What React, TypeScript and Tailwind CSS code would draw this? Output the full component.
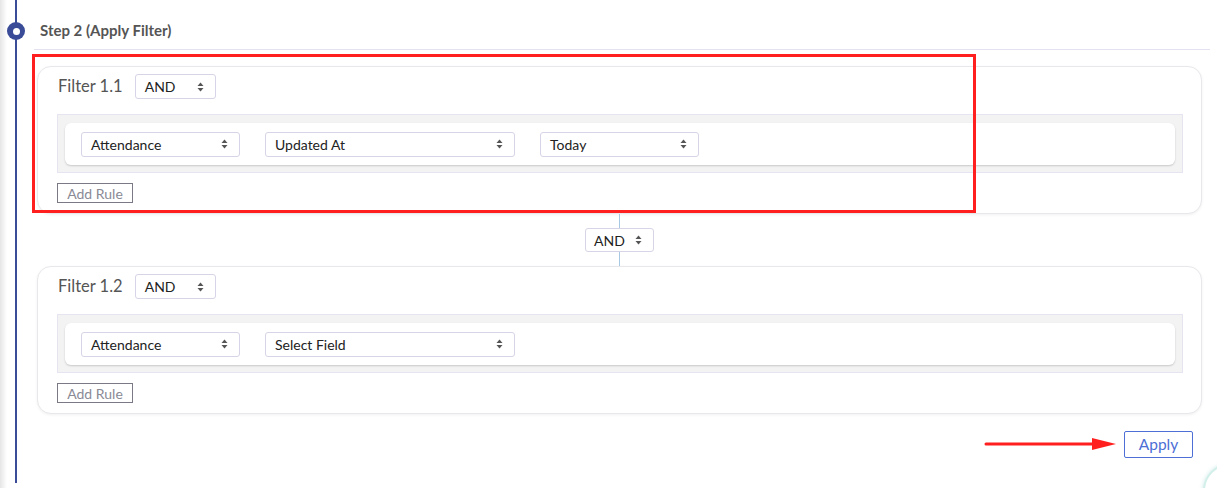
import React from "react";

const font = { fontFamily: "Lato, 'Open Sans', sans-serif" };

function Arrows() {
  return (
    <svg width="7" height="10" viewBox="0 0 7 10" className="shrink-0">
      <path d="M3.5 0.5 L6.5 4 L0.5 4 Z" fill="#555" />
      <path d="M3.5 9.5 L6.5 6 L0.5 6 Z" fill="#555" />
    </svg>
  );
}

function Select({ label, w }: { label: string; w: string }) {
  return (
    <div
      className={`${w} flex h-[25px] items-center justify-between rounded-[3px] border border-[#d6d4e6] bg-white pl-[9px] pr-[11px] text-[14px] text-[#222]`}
    >
      <span>{label}</span>
      <Arrows />
    </div>
  );
}

function FilterCard({ name, rules }: { name: string; rules: { label: string; w: string }[] }) {
  return (
    <div className="h-[148px] rounded-[14px] border border-[#e8e8ec] bg-white pl-[19px] pr-[18px] pt-[7px] shadow-[0_1px_3px_rgba(0,0,0,0.06)]">
      <div className="ml-px flex items-center gap-[12px]">
        <span className="text-[16.5px] text-[#555]">{name}</span>
        <Select label="AND" w="w-[81px]" />
      </div>
      <div className="mt-[15px] h-[59px] border border-[#e6e4f0] bg-[#f3f3f3] px-[7px] pt-[8px]">
        <div className="flex h-[42px] items-center gap-[25px] rounded-[6px] bg-white pl-[16px] shadow-[0_1px_2px_rgba(0,0,0,0.18)]">
          {rules.map((r, i) => (
            <Select key={i} label={r.label} w={r.w} />
          ))}
        </div>
      </div>
      <button
        type="button"
        className="mt-[10px] flex h-[20px] w-[76px] items-center justify-center border border-[#7a7a86] text-[14px] text-[#8a8a96]"
      >
        Add Rule
      </button>
    </div>
  );
}

export default function App() {
  return (
    <div className="relative flex h-[488px] w-[1217px] overflow-hidden bg-white" style={font}>
      {/* left edge shade */}
      <div className="w-[7px] shrink-0 bg-gradient-to-r from-[#e6e6e6] to-white" />

      {/* timeline */}
      <div className="relative w-[27px] shrink-0">
        <div className="absolute left-[8px] top-0 h-[483px] w-[2px] bg-[#3a4c98]" />
        <div className="absolute left-0 top-[22px] flex h-[18px] w-[18px] items-center justify-center rounded-full bg-[#3a4c98]">
          <div className="h-[7px] w-[7px] rounded-full bg-white" />
        </div>
      </div>

      {/* main */}
      <div className="w-[1176px] shrink-0">
        <div className="flex h-[50px] items-end border-b border-[#e4e2f0] pb-[8px] pl-[6px]">
          <span className="text-[15px] font-bold text-[#555]">Step 2 (Apply Filter)</span>
        </div>

        <div className="pl-[3px] pr-[8px] pt-[16px]">
          <FilterCard
            name="Filter 1.1"
            rules={[
              { label: "Attendance", w: "w-[159px]" },
              { label: "Updated At", w: "w-[250px]" },
              { label: "Today", w: "w-[159px]" },
            ]}
          />

          <div className="flex flex-col items-center">
            <div className="h-[14px] w-px bg-[#a9c9e2]" />
            <div className="flex h-[24px] w-[69px] items-center justify-between rounded-[3px] border border-[#d6d4e6] pl-[8px] pr-[11px] text-[14px] text-[#222]">
              <span>AND</span>
              <Arrows />
            </div>
            <div className="h-[14px] w-px bg-[#a9c9e2]" />
          </div>

          <FilterCard
            name="Filter 1.2"
            rules={[
              { label: "Attendance", w: "w-[159px]" },
              { label: "Select Field", w: "w-[250px]" },
            ]}
          />

          <div className="flex justify-end pr-[9px] pt-[17px]">
            <button
              type="button"
              className="flex h-[27px] w-[69px] items-center justify-center rounded-[2px] border border-[#4d6fd6] text-[15.5px] text-[#4d6fd6]"
            >
              Apply
            </button>
          </div>
        </div>
      </div>

      {/* annotation: red box */}
      <div className="pointer-events-none absolute left-[32px] top-[54px] h-[159px] w-[944px] border-[3px] border-[#ff1f1f]" />

      {/* annotation: red arrow */}
      <svg className="pointer-events-none absolute left-[984px] top-[436px]" width="134" height="16" viewBox="0 0 134 16">
        <line x1="2" y1="8" x2="112" y2="8" stroke="#ff1f1f" strokeWidth="3" strokeLinecap="round" />
        <path d="M108 2 L132 8 L108 14 Z" fill="#ff1f1f" />
      </svg>

      {/* chat widget peeking in */}
      <div className="absolute left-[1203px] top-[463px] h-[56px] w-[56px] rounded-full border-2 border-[#d3efe9] bg-white shadow-[0_0_4px_rgba(120,200,190,0.4)]" />
    </div>
  );
}
